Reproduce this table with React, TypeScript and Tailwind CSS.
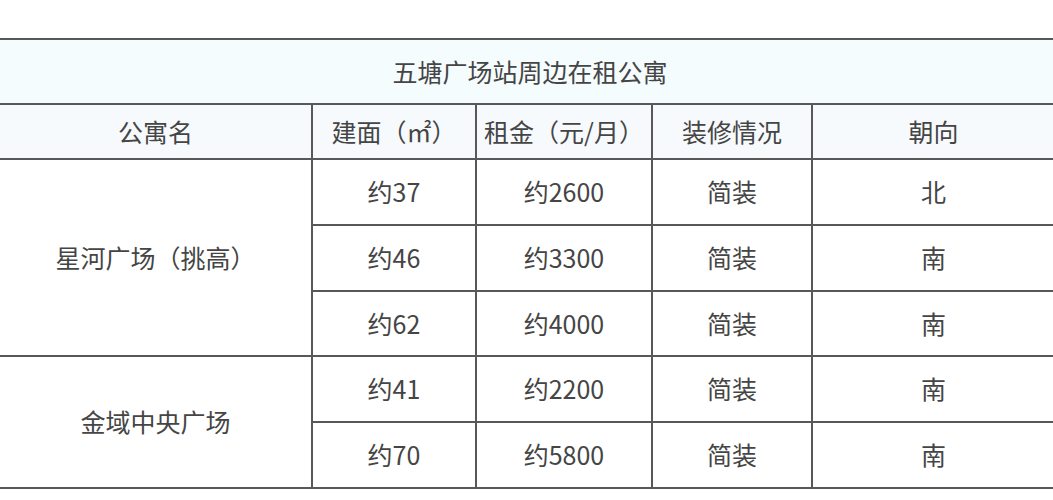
const rows = [
  { area: "约37", rent: "约2600", deco: "简装", dir: "北" },
  { area: "约46", rent: "约3300", deco: "简装", dir: "南" },
  { area: "约62", rent: "约4000", deco: "简装", dir: "南" },
  { area: "约41", rent: "约2200", deco: "简装", dir: "南" },
  { area: "约70", rent: "约5800", deco: "简装", dir: "南" },
];

function Cell({ children, className = "" }: { children?: React.ReactNode; className?: string }) {
  return (
    <div className={"flex items-center justify-center bg-white " + className}>
      {children}
    </div>
  );
}

export default function App() {
  return (
    <div
      className="w-[1053px] h-[500px] overflow-hidden bg-white pt-[38px] text-[25px] text-[#454545]"
      style={{ fontFamily: '"Noto Sans CJK SC", "Noto Sans", sans-serif' }}
    >
      {/* right edge of the table runs off screen */}
      <div className="-ml-[2px] w-[1062px] bg-[#585858] p-[2px] pr-0 grid grid-cols-[311px_162px_174px_158px_1fr] grid-rows-[63px_53px_64px_64px_63px_64px_64px] gap-[2px]">
        {/* title */}
        <Cell className="col-span-5 !bg-[#f5fcfe]">五塘广场站周边在租公寓</Cell>

        {/* header */}
        <Cell className="!bg-[#f7fafd]">公寓名</Cell>
        <Cell className="!bg-[#f7fafd]">建面（㎡）</Cell>
        <Cell className="!bg-[#f7fafd]">租金（元/月）</Cell>
        <Cell className="!bg-[#f7fafd]">装修情况</Cell>
        <Cell className="!bg-[#f7fafd] pr-[6px]">朝向</Cell>

        {/* 星河广场 */}
        <Cell className="row-span-3">星河广场（挑高）</Cell>
        {rows.slice(0, 3).map((r) => (
          <Row key={r.area} r={r} />
        ))}

        {/* 金域中央广场 */}
        <Cell className="row-span-2">金域中央广场</Cell>
        {rows.slice(3).map((r) => (
          <Row key={r.area} r={r} />
        ))}
      </div>
    </div>
  );
}

function Row({ r }: { r: (typeof rows)[number] }) {
  return (
    <>
      <Cell>{r.area}</Cell>
      <Cell>{r.rent}</Cell>
      <Cell>{r.deco}</Cell>
      <Cell className="pr-[6px]">{r.dir}</Cell>
    </>
  );
}
